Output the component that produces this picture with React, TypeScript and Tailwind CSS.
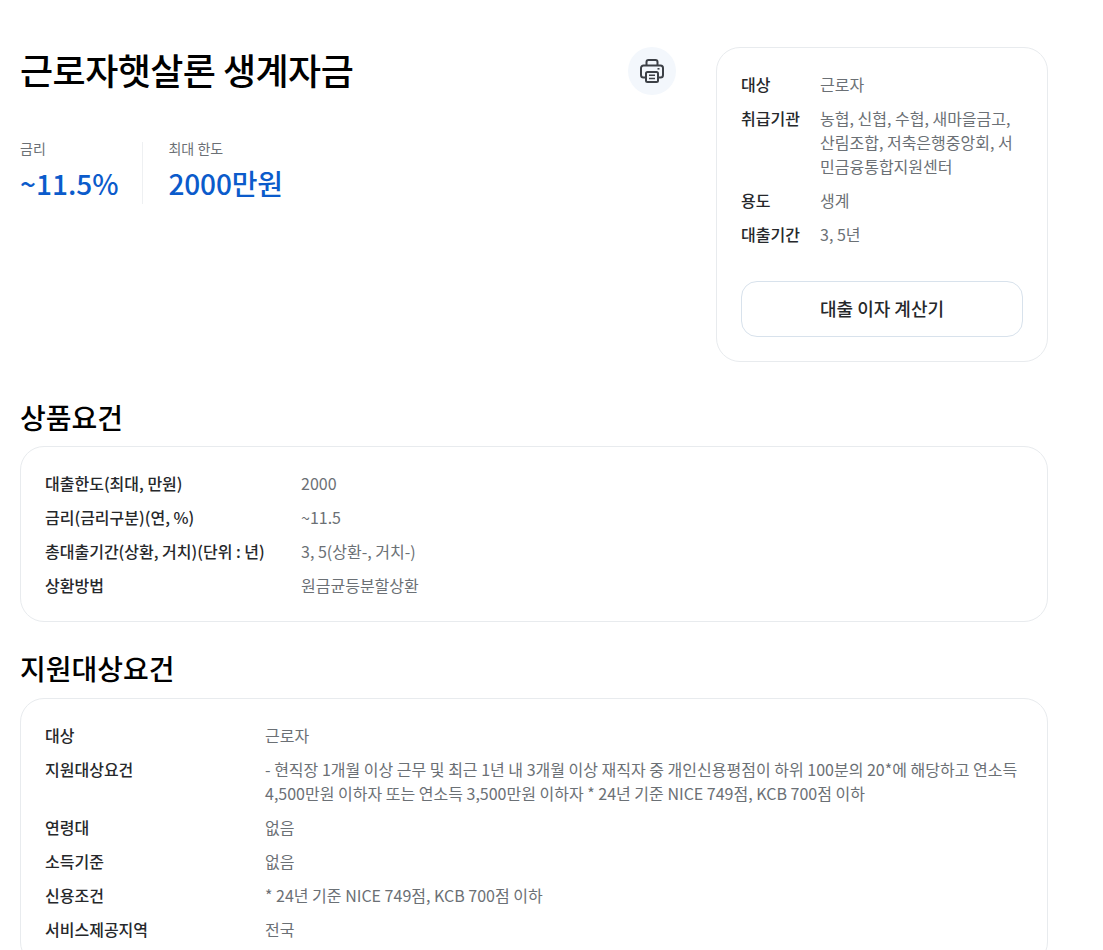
import { ReactNode } from "react";

function Row({ label, width, children, className = "" }: { label: string; width: string; children: ReactNode; className?: string }) {
  return (
    <div className={`flex text-[16px] leading-6 ${className}`}>
      <div className={`shrink-0 font-medium text-[#26282b] ${width}`}>{label}</div>
      <div className="text-[#6b7075]">{children}</div>
    </div>
  );
}

function PrintIcon() {
  return (
    <svg viewBox="0 0 24 24" className="h-6 w-6" fill="none" stroke="#3c4046" strokeWidth="2" strokeLinejoin="round">
      <path d="M6.5 6.5V3a2 2 0 0 1 2-2h7a2 2 0 0 1 2 2v3.5" />
      <path d="M6 18.5H3.5A2.5 2.5 0 0 1 1 16v-7a2.5 2.5 0 0 1 2.5-2.5h17A2.5 2.5 0 0 1 23 9v7a2.5 2.5 0 0 1-2.5 2.5H18" />
      <rect x="6" y="13" width="12" height="10" rx="1.5" />
      <path d="M9 16.2h6M9 19.6h6" strokeWidth="1.5" />
      <path d="M17.5 9.8h2" strokeWidth="1.6" />
    </svg>
  );
}

export default function App() {
  return (
    <div className="min-h-[950px] w-[1103px] overflow-hidden bg-white font-['Noto_Sans_CJK_KR','Noto_Sans',sans-serif]">
      <div className="ml-5 w-[1028px] pt-[47px]">
        <div className="flex justify-between">
          <div className="w-[656px]">
            <div className="flex items-start justify-between">
              <h1 className="text-[36px] font-medium leading-[45px] tracking-[-0.55px] text-black">근로자햇살론 생계자금</h1>
              <button className="flex h-12 w-12 items-center justify-center rounded-full bg-[#f3f7fc]">
                <PrintIcon />
              </button>
            </div>
            <div className="mt-[47px] flex">
              <div className="border-r border-[#eef0f2] pb-[3px] pr-6">
                <div className="text-[14px] leading-[13px] text-[#6b7075]">금리</div>
                <div className="mt-[10px] text-[28px] font-medium leading-[36px] text-[#0b5bcb]">~11.5%</div>
              </div>
              <div className="pl-[25px]">
                <div className="text-[14px] leading-[13px] text-[#6b7075]">최대 한도</div>
                <div className="mt-[10px] text-[28px] font-medium leading-[36px] tracking-[-0.15px] text-[#0b5bcb]">2000만원</div>
              </div>
            </div>
          </div>
          <aside className="w-[332px] rounded-[24px] border border-[#e8ebee] px-6 pb-6 pt-6">
            <div className="flex flex-col gap-[10px]">
              <Row label="대상" width="w-[79px]">근로자</Row>
              <Row label="취급기관" width="w-[79px]">농협, 신협, 수협, 새마을금고, 산림조합, 저축은행중앙회, 서민금융통합지원센터</Row>
              <Row label="용도" width="w-[79px]">생계</Row>
              <Row label="대출기간" width="w-[79px]">3, 5년</Row>
            </div>
            <button className="mt-[35px] h-[56px] w-full rounded-2xl border border-[#d8e2ec] pb-0.5 text-[18px] font-medium text-[#26282b]">대출 이자 계산기</button>
          </aside>
        </div>

        <h2 className="mt-[36px] text-[28px] font-medium leading-[38px] text-black">상품요건</h2>
        <section className="mt-[10px] flex flex-col gap-[10px] rounded-[24px] border border-[#e8ebee] px-6 py-6">
          <Row label="대출한도(최대, 만원)" width="w-[256px]">2000</Row>
          <Row label="금리(금리구분)(연, %)" width="w-[256px]">~11.5</Row>
          <Row label="총대출기간(상환, 거치)(단위 : 년)" width="w-[256px]">3, 5(상환-, 거치-)</Row>
          <Row label="상환방법" width="w-[256px]">원금균등분할상환</Row>
        </section>

        <h2 className="mt-[27px] text-[28px] font-medium leading-[38px] text-black">지원대상요건</h2>
        <section className="mt-[11px] flex flex-col gap-[10px] rounded-[24px] border border-[#e8ebee] px-6 py-6">
          <Row label="대상" width="w-[220px]">근로자</Row>
          <Row label="지원대상요건" width="w-[220px]">- 현직장 1개월 이상 근무 및 최근 1년 내 3개월 이상 재직자 중 개인신용평점이 하위 100분의 20*에 해당하고 연소득 4,500만원 이하자 또는 연소득 3,500만원 이하자 * 24년 기준 NICE 749점, KCB 700점 이하</Row>
          <Row label="연령대" width="w-[220px]">없음</Row>
          <Row label="소득기준" width="w-[220px]">없음</Row>
          <Row label="신용조건" width="w-[220px]">* 24년 기준 NICE 749점, KCB 700점 이하</Row>
          <Row label="서비스제공지역" width="w-[220px]">전국</Row>
        </section>
      </div>
    </div>
  );
}
